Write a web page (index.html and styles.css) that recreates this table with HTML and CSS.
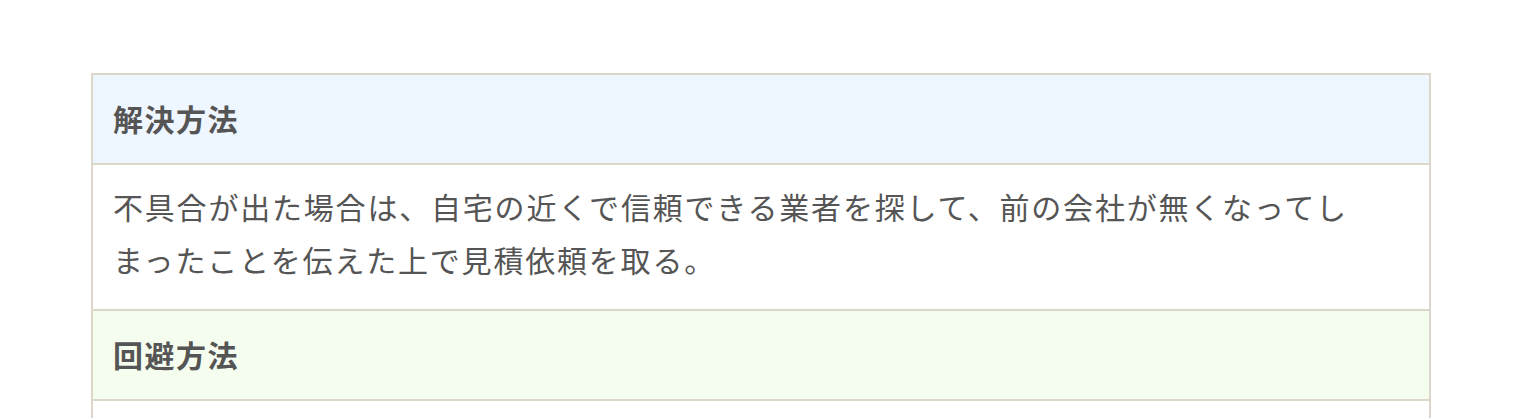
FILE: index.html
```html
<!DOCTYPE html>
<html lang="ja">
<head>
    <meta charset="UTF-8">
    <meta name="viewport" content="width=device-width, initial-scale=1.0">
    <title>解決方法</title>
    <link rel="stylesheet" href="styles.css">
</head>
<body>

    <div class="case-box">
        <div class="case-head solve">解決方法</div>
        <div class="case-body">
            不具合が出た場合は、自宅の近くで信頼できる業者を探して、前の会社が無くなってしまったことを伝えた上で見積依頼を取る。
        </div>
        <div class="case-head avoid">回避方法</div>
        <div class="case-body">
            施工をお願いする前に、会社の経営状況や保証の内容をしっかりと確認しておく。
        </div>
    </div>

</body>
</html>
```

FILE: styles.css
```css
body {
    font-family: "Noto Sans CJK JP", "Noto Sans", sans-serif;
    margin: 0;
    padding: 0;
    background-color: #fff;
    color: #555;
}
.case-box {
    width: 1340px;
    box-sizing: border-box;
    margin: 73px 0 0 91px;
    border: 2px solid #ddd6cb;
}
.case-head {
    height: 90px;
    box-sizing: border-box;
    display: flex;
    align-items: center;
    padding: 0 20px 2px;
    font-size: 30px;
    font-weight: bold;
    letter-spacing: 1.5px;
    border-bottom: 2px solid #ddd6cb;
}
.case-head.solve {
    background-color: #eef6ff;
}
.case-head.avoid {
    background-color: #f5fdef;
}
.case-body {
    padding: 15px 60px 23px 20px;
    font-size: 30px;
    line-height: 53px;
    letter-spacing: 1.8px;
    border-bottom: 2px solid #ddd6cb;
}
```
